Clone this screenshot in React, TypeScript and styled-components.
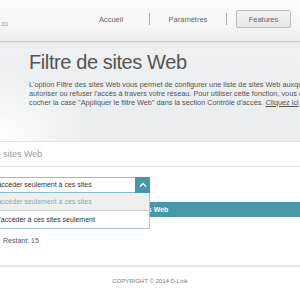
import React from "react";
import styled, { createGlobalStyle } from "styled-components";

const GlobalStyle = createGlobalStyle`
  html, body { margin: 0; padding: 0; background: #ffffff; }
  body { overflow: hidden; font-family: "Liberation Sans", Arial, sans-serif; }
  * { box-sizing: border-box; }
`;

const Page = styled.div`
  width: 300px;
  height: 300px;
  overflow: hidden;
`;

const Header = styled.header`
  height: 42px;
  display: flex;
  align-items: flex-start;
  background: linear-gradient(180deg, #fbfbfb 0%, #f7f7f7 60%, #ededed 100%);
  border-bottom: 1px solid #cfcfcf;
  box-shadow: 0 1px 2px rgba(0, 0, 0, 0.06);
  position: relative;
  z-index: 1;
`;

const Version = styled.div`
  margin-top: 21px;
  margin-left: -3.4px;
  font-size: 6px;
  color: #8c8c8c;
  white-space: nowrap;
`;

const Nav = styled.nav`
  margin-left: auto;
  display: flex;
  align-items: flex-start;
  height: 41px;
`;

const NavItem = styled.div<{ $w: number }>`
  width: ${(p) => p.$w}px;
  height: 38px;
  display: flex;
  align-items: center;
  justify-content: center;
  font-size: 7.5px;
  color: #666;
  white-space: nowrap;
`;

const NavSep = styled.div`
  width: 1px;
  height: 12px;
  margin-top: 13px;
  background: #a9a9a9;
`;

const Tab = styled.div`
  width: 55px;
  height: 18px;
  display: flex;
  align-items: center;
  justify-content: center;
  border: 1px solid #bdbdbd;
  border-radius: 2px;
  background: linear-gradient(180deg, #f3f3f3, #e7e7e7);
  color: #666;
`;

const Banner = styled.section`
  padding: 9px 0 34px 29px;
  background:
    radial-gradient(ellipse 90px 70px at 0% 100%, rgba(255,255,255,1) 0%, rgba(255,255,255,0) 100%),
    linear-gradient(180deg, #eef0f1 0%, #eaedee 100%);
  border-bottom: 1px solid #e2e4e5;
`;

const Title = styled.h1`
  margin: 0;
  font-weight: normal;
  font-size: 20px;
  letter-spacing: -0.4px;
  line-height: 23px;
  color: #555;
  white-space: nowrap;
`;

const Intro = styled.p`
  margin: 6px 0 0 0;
  font-size: 7.3px;
  line-height: 9px;
  color: #555;
  white-space: nowrap;
`;

const Link = styled.span`
  text-decoration: underline;
`;

const Content = styled.div`
  margin-left: -77px;
  width: 460px;
`;

const SectionHeading = styled.h2`
  margin: 0;
  height: 25px;
  padding-left: 46px;
  font-weight: normal;
  font-size: 9px;
  line-height: 24px;
  color: #9a9a9a;
  border-bottom: 1px solid #e4e4e4;
  white-space: nowrap;
`;

const Controls = styled.div`
  padding-top: 10px;
`;

const SelectWrap = styled.div`
  position: relative;
  width: 227px;
  height: 16px;
`;

const SelectBox = styled.div`
  display: flex;
  height: 16px;
  border: 1px solid #8fbcc7;
  background: #fff;
`;

const SelectValue = styled.div`
  flex: 1;
  padding-left: 5px;
  font-size: 7px;
  line-height: 14px;
  color: #333;
  white-space: nowrap;
  overflow: hidden;
`;

const SelectButton = styled.div`
  width: 15px;
  margin: -1px -1px -1px 0;
  background: #4796a9;
  display: flex;
  align-items: center;
  justify-content: center;
`;

const Menu = styled.ul`
  position: absolute;
  top: 16px;
  left: 0;
  width: 227px;
  margin: 0;
  padding: 0;
  list-style: none;
  background: #fff;
  border: 1px solid #a7c3cb;
  border-top: none;
  z-index: 5;
`;

const Option = styled.li<{ $active?: boolean }>`
  height: ${(p) => (p.$active ? 18 : 17)}px;
  padding-left: 5px;
  font-size: 7px;
  line-height: 17px;
  white-space: nowrap;
  background: ${(p) => (p.$active ? "#efefef" : "#fff")};
  color: ${(p) => (p.$active ? "#86a9b3" : "#333")};
  border-bottom: ${(p) => (p.$active ? "1px solid #c9d3d6" : "none")};
`;

const Table = styled.div`
  margin-top: 9px;
`;

const TableHead = styled.div`
  display: grid;
  grid-template-columns: 207px 1fr;
  height: 15px;
  background: #4796a9;
  color: #fff;
  font-weight: bold;
  font-size: 7px;
  line-height: 15px;
`;

const HeadCell = styled.div`
  padding-left: 5px;
  white-space: nowrap;
`;

const Remaining = styled.div`
  margin-top: 19px;
  padding-left: 80px;
  font-size: 7px;
  line-height: 9px;
  color: #555;
`;

const Footer = styled.footer`
  margin-top: 20px;
  border-top: 2px solid #e7e7e7;
  padding-top: 10px;
  text-align: center;
  font-size: 6px;
  line-height: 9px;
  color: #7a7a7a;
`;

const ChevronUp = () => (
  <svg width="8" height="6" viewBox="0 0 8 6" fill="none">
    <polyline points="1,4.5 4,1.5 7,4.5" stroke="#fff" strokeWidth="1.3" />
  </svg>
);

export default function App() {
  return (
    <>
      <GlobalStyle />
      <Page>
        <Header>
          <Version>1.01</Version>
          <Nav>
            <NavItem $w={76}>Accueil</NavItem>
            <NavSep />
            <NavItem $w={76}>Paramètres</NavItem>
            <NavSep />
            <NavItem $w={73}>
              <Tab>Features</Tab>
            </NavItem>
          </Nav>
        </Header>
        <Banner>
          <Title>Filtre de sites Web</Title>
          <Intro>
            L'option Filtre des sites Web vous permet de configurer une liste de sites Web auxquels vous souhaitez
            <br />
            autoriser ou refuser l'accès à travers votre réseau. Pour utiliser cette fonction, vous devez également
            <br />
            cocher la case "Appliquer le filtre Web" dans la section Contrôle d'accès. <Link>Cliquez ici</Link> pour y accéder.
          </Intro>
        </Banner>
        <Content>
          <SectionHeading>Liste de sites Web</SectionHeading>
          <Controls>
            <SelectWrap>
              <SelectBox>
                <SelectValue>Autoriser les clients à accéder seulement à ces sites</SelectValue>
                <SelectButton>
                  <ChevronUp />
                </SelectButton>
              </SelectBox>
              <Menu>
                <Option $active>Autoriser les clients à accéder seulement à ces sites</Option>
                <Option>Empêcher les clients d'accéder à ces sites seulement</Option>
              </Menu>
            </SelectWrap>
            <Table>
              <TableHead>
                <HeadCell>Numéro</HeadCell>
                <HeadCell>Sites Web</HeadCell>
              </TableHead>
            </Table>
          </Controls>
          <Remaining>Restant: 15</Remaining>
        </Content>
        <Footer>COPYRIGHT © 2014 D-Link</Footer>
      </Page>
    </>
  );
}
